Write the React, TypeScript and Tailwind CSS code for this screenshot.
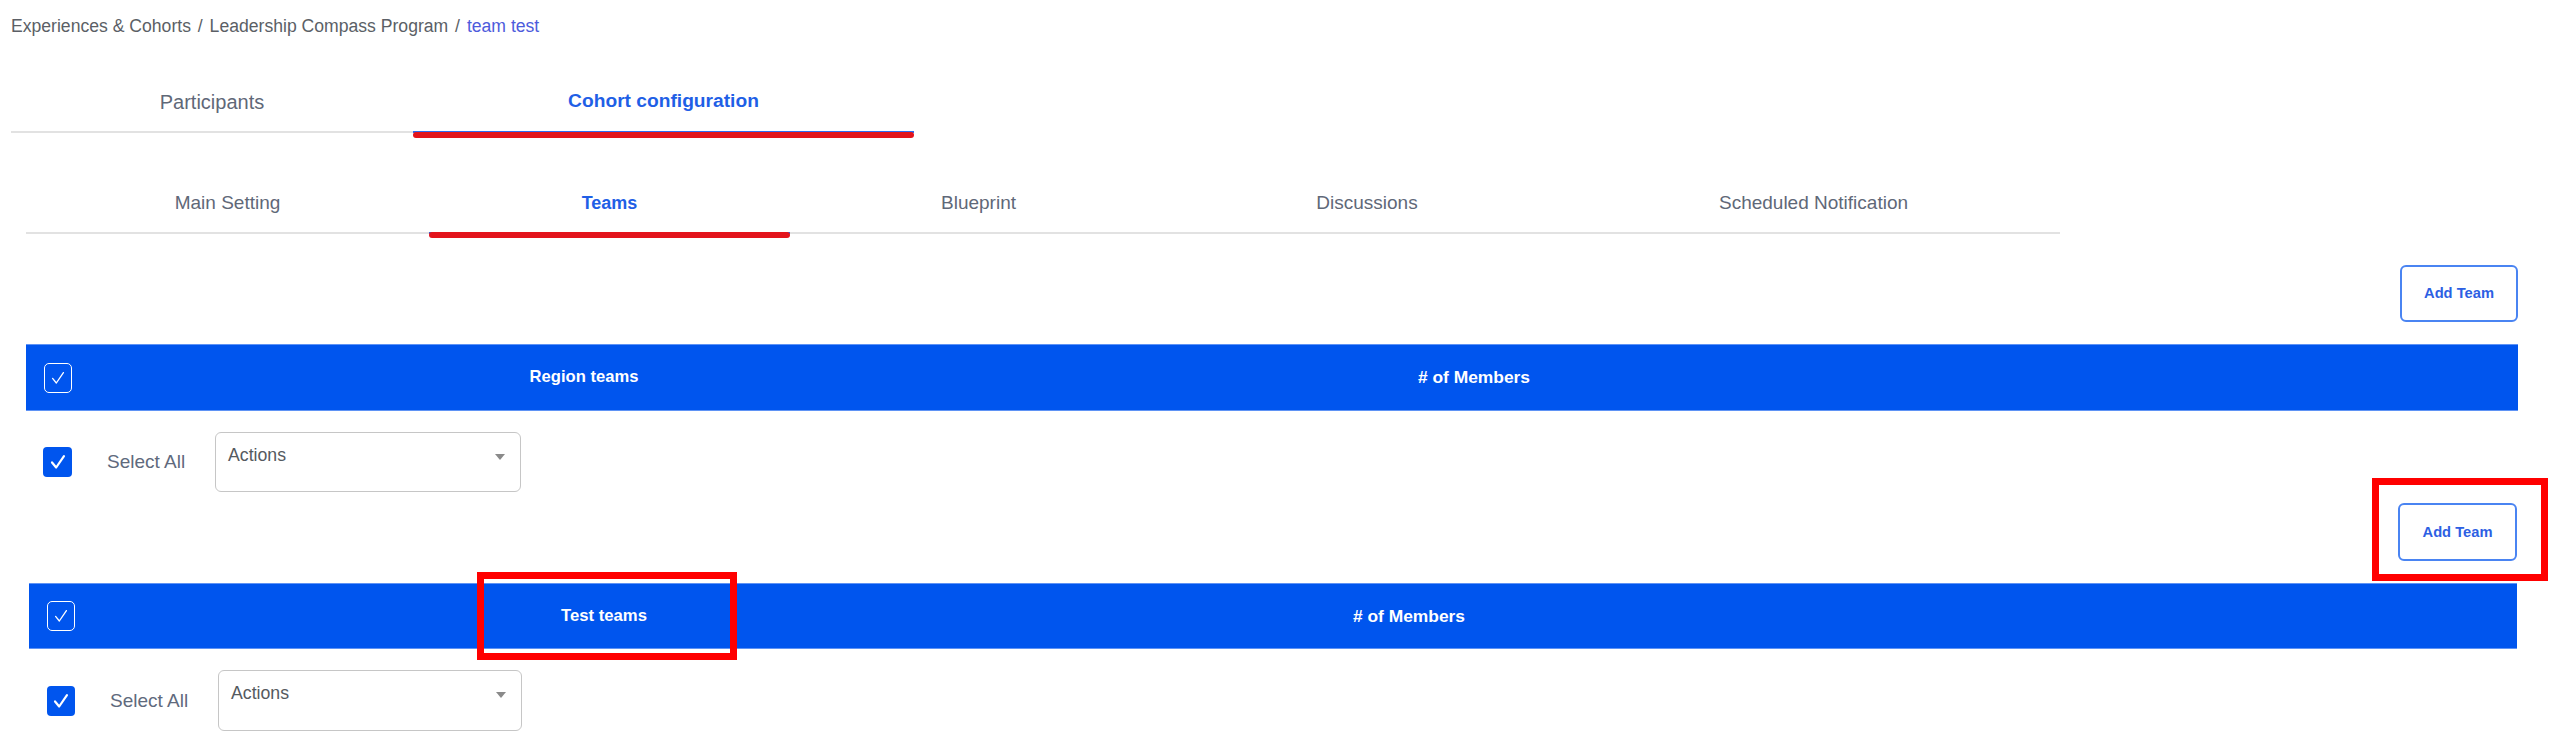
import React from "react";

const CheckMark = ({ className, sw = 2 }: { className?: string; sw?: number }) => (
  <svg viewBox="0 0 24 24" className={className} fill="none" stroke="currentColor" strokeWidth={sw} strokeLinecap="round" strokeLinejoin="round">
    <path d="M5.5 12.5l4.5 5.5L18.5 5.5" />
  </svg>
);

const HeaderBox = () => (
  <div className="w-[28px] h-[30px] rounded-[5px] border-[1.5px] border-white flex items-center justify-center text-white">
    <CheckMark className="w-[20px] h-[20px]" sw={1.6} />
  </div>
);

const FilledBox = ({ w }: { w: string }) => (
  <div className={`${w} h-[30px] rounded-[4px] bg-[#0055ee] flex items-center justify-center text-white`}>
    <CheckMark className="w-[22px] h-[22px]" sw={2.4} />
  </div>
);

const ActionsBox = ({ w, h }: { w: string; h: string }) => (
  <div className={`${w} ${h} rounded-[6px] border border-[#c6c6c6] flex items-start justify-between pl-[12px] pr-[15px] pt-[12px]`}>
    <span className="text-[17.7px] leading-[20px] text-[#555a60]">Actions</span>
    <span className="mt-[9px] w-0 h-0 border-l-[5px] border-r-[5px] border-t-[6px] border-l-transparent border-r-transparent border-t-[#8a8a8a]" />
  </div>
);

export default function App() {
  return (
    <div className="w-[2551px] h-[746px] bg-white overflow-hidden font-['Liberation_Sans',Arial,sans-serif]">
      {/* Breadcrumb */}
      <div className="pl-[11px] pt-[16px] text-[17.6px] leading-[20px] text-[#5b5f66] whitespace-nowrap">
        Experiences &amp; Cohorts <span className="mx-[2px]">/</span> Leadership Compass Program <span className="mx-[2px]">/</span> <span className="text-[#4d5bdc]">team test</span>
      </div>

      {/* Top tabs */}
      <div className="ml-[11px] mt-[36px] flex">
        <div className="w-[402px] h-[61px] border-b-2 border-[#e2e2e2] flex items-center justify-center text-[20px] text-[#5f6878]">
          Participants
        </div>
        <div className="relative w-[501px] h-[61px] border-b-2 border-[#2e6cf0] flex items-center justify-center text-[19.2px] font-bold text-[#1f5fe6]">
          Cohort configuration
          <div className="absolute left-0 right-0 top-[60px] h-[6px] rounded-full bg-[#e3141c]" />
        </div>
      </div>

      {/* Sub tabs */}
      <div className="ml-[26px] mt-[42px] flex text-[19px] text-[#5f6878]">
        <div className="w-[403px] h-[59px] border-b-2 border-[#e2e2e2] flex items-center justify-center">Main Setting</div>
        <div className="relative w-[361px] h-[59px] border-b-2 border-[#2e6cf0] flex items-center justify-center font-bold text-[18px] text-[#1f5fe6]">
          Teams
          <div className="absolute left-0 right-0 top-[57px] h-[6px] rounded-full bg-[#e3141c]" />
        </div>
        <div className="w-[377px] h-[59px] border-b-2 border-[#e2e2e2] flex items-center justify-center">Blueprint</div>
        <div className="w-[400px] h-[59px] border-b-2 border-[#e2e2e2] flex items-center justify-center">Discussions</div>
        <div className="w-[493px] h-[59px] border-b-2 border-[#e2e2e2] flex items-center justify-center">Scheduled Notification</div>
      </div>

      {/* Add Team 1 */}
      <div className="mt-[31px] flex justify-end pr-[33px]">
        <button className="w-[118px] h-[57px] rounded-[6px] border-2 border-[#4a84f2] bg-white text-[14.7px] font-bold text-[#2d5fe3]">
          Add Team
        </button>
      </div>

      {/* Bar 1 */}
      <div className="ml-[26px] mt-[22px] w-[2492px] h-[67px] bg-[#0055ee] border-y border-[#5f93f5] flex items-center text-white font-bold">
        <div className="w-[80px] pl-[18px]">
          <HeaderBox />
        </div>
        <div className="w-[956px] text-center text-[16.6px]">Region teams</div>
        <div className="w-[824px] text-center text-[17.4px]"># of Members</div>
      </div>

      {/* Row 1 */}
      <div className="ml-[43px] mt-[21px] flex items-center">
        <FilledBox w="w-[29px]" />
        <span className="ml-[35px] w-[79px] whitespace-nowrap text-[19px] leading-[22px] text-[#5f6a7d]">Select All</span>
        <div className="ml-[29px]">
          <ActionsBox w="w-[306px]" h="h-[60px]" />
        </div>
      </div>

      {/* Add Team 2 */}
      <div className="mt-[11px] flex justify-end pr-[34px]">
        <div className="relative">
          <button className="w-[119px] h-[58px] rounded-[6px] border-2 border-[#4a84f2] bg-white text-[14.7px] font-bold text-[#2d5fe3]">
            Add Team
          </button>
          <div className="absolute left-[-26px] top-[-25px] right-[-31px] bottom-[-20px] border-[7px] border-[#ff0000]" />
        </div>
      </div>

      {/* Bar 2 */}
      <div className="ml-[29px] mt-[22px] w-[2488px] h-[66px] bg-[#0055ee] border-y border-[#5f93f5] flex items-center text-white font-bold">
        <div className="w-[80px] pl-[18px]">
          <HeaderBox />
        </div>
        <div className="relative w-[990px] h-full flex items-center justify-center text-[16.7px]">
          Test teams
          <div className="absolute left-[368px] top-[-12px] w-[260px] h-[88px] border-[7px] border-[#ff0000]" />
        </div>
        <div className="w-[620px] text-center text-[17.4px]"># of Members</div>
      </div>

      {/* Row 2 */}
      <div className="ml-[47px] mt-[21px] flex items-center">
        <FilledBox w="w-[28px]" />
        <span className="ml-[35px] w-[79px] whitespace-nowrap text-[19px] leading-[22px] text-[#5f6a7d]">Select All</span>
        <div className="ml-[29px]">
          <ActionsBox w="w-[304px]" h="h-[61px]" />
        </div>
      </div>
    </div>
  );
}
